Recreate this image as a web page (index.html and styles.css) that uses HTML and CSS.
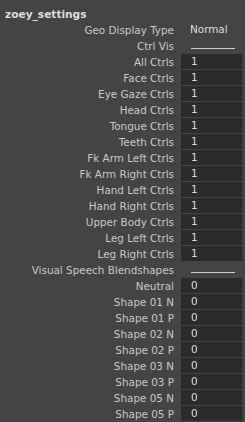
FILE: index.html
```html
<!DOCTYPE html>
<html lang="en">
<head>
  <meta charset="UTF-8">
  <title>zoey_settings</title>
  <link rel="stylesheet" href="styles.css">
</head>
<body>
  <div id="panel">
    <div class="title">zoey_settings</div>
    <div class="attrs">
      <div class="label">Geo Display Type</div><div class="enum">Normal</div>
      <div class="label">Ctrl Vis</div><div class="sep"><span></span></div>
      <div class="label">All Ctrls</div><div class="field">1</div>
      <div class="label">Face Ctrls</div><div class="field">1</div>
      <div class="label">Eye Gaze Ctrls</div><div class="field">1</div>
      <div class="label">Head Ctrls</div><div class="field">1</div>
      <div class="label">Tongue Ctrls</div><div class="field">1</div>
      <div class="label">Teeth Ctrls</div><div class="field">1</div>
      <div class="label">Fk Arm Left Ctrls</div><div class="field">1</div>
      <div class="label">Fk Arm Right Ctrls</div><div class="field">1</div>
      <div class="label">Hand Left Ctrls</div><div class="field">1</div>
      <div class="label">Hand Right Ctrls</div><div class="field">1</div>
      <div class="label">Upper Body Ctrls</div><div class="field">1</div>
      <div class="label">Leg Left Ctrls</div><div class="field">1</div>
      <div class="label">Leg Right Ctrls</div><div class="field">1</div>
      <div class="label">Visual Speech Blendshapes</div><div class="sep"><span></span></div>
      <div class="label">Neutral</div><div class="field">0</div>
      <div class="label">Shape 01 N</div><div class="field">0</div>
      <div class="label">Shape 01 P</div><div class="field">0</div>
      <div class="label">Shape 02 N</div><div class="field">0</div>
      <div class="label">Shape 02 P</div><div class="field">0</div>
      <div class="label">Shape 03 N</div><div class="field">0</div>
      <div class="label">Shape 03 P</div><div class="field">0</div>
      <div class="label">Shape 05 N</div><div class="field">0</div>
      <div class="label">Shape 05 P</div><div class="field">0</div>
    </div>
  </div>
</body>
</html>
```

FILE: styles.css
```css
* { margin: 0; padding: 0; box-sizing: border-box; }
body {
  background: #444444;
  font-family: "DejaVu Sans", sans-serif;
  font-size: 10.4px;
  color: #c8c8c8;
  overflow: hidden;
}
#panel {
  padding-top: 7px;
}
.title {
  height: 15px;
  line-height: 15px;
  padding-left: 5px;
  font-weight: bold;
  font-size: 10.6px;
  color: #dddddd;
}
.attrs {
  display: grid;
  grid-template-columns: 181px 1fr;
  grid-auto-rows: 16px;
}
.label {
  text-align: right;
  padding-right: 7px;
  line-height: 16px;
  white-space: nowrap;
}
.enum {
  line-height: 15px;
  padding-left: 9px;
  color: #dddddd;
}
.sep {
  display: flex;
  align-items: center;
  padding-left: 10px;
}
.sep span {
  display: block;
  width: 44px;
  height: 1px;
  margin-top: 4px;
  background: #cfcfcf;
}
.field {
  height: 15px;
  line-height: 15px;
  background: #2b2b2b;
  padding-left: 10px;
  color: #dddddd;
  margin-right: 2px;
  border-right: 1px solid #3a3a3a;
}
```
